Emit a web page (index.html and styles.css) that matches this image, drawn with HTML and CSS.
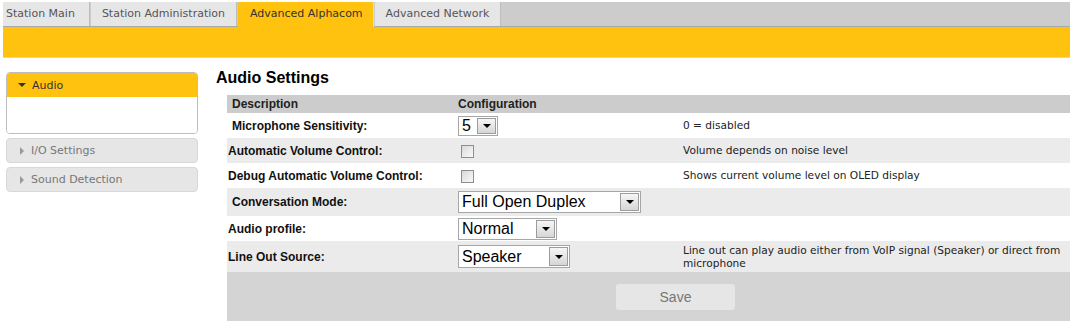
FILE: index.html
```html
<!DOCTYPE html>
<html lang="en">
<head>
  <meta charset="UTF-8">
  <meta name="viewport" content="width=device-width, initial-scale=1.0">
  <title>Advanced Alphacom - Audio</title>
  <link rel="stylesheet" href="styles.css">
</head>
<body>
  <div class="tabs">
    <a class="tab first">Station Main</a>
    <a class="tab">Station Administration</a>
    <a class="tab active">Advanced Alphacom</a>
    <a class="tab">Advanced Network</a>
  </div>
  <div class="subbar"></div>

  <div class="content">
    <div class="sidebar">
      <div class="panel open">
        <div class="panel-head"><span class="arrow down"></span>Audio</div>
        <div class="panel-body"></div>
      </div>
      <div class="panel">
        <div class="panel-head"><span class="arrow right"></span>I/O Settings</div>
      </div>
      <div class="panel">
        <div class="panel-head"><span class="arrow right"></span>Sound Detection</div>
      </div>
    </div>

    <div class="main">
      <h2>Audio Settings</h2>
      <table class="settings">
        <tr class="head">
          <th class="c1 ind">Description</th>
          <th class="c2">Configuration</th>
          <th class="c3"></th>
        </tr>
        <tr class="r1">
          <td class="label ind">Microphone Sensitivity:</td>
          <td><span class="select s-num"><span class="val">5</span><span class="drop"><i></i></span></span></td>
          <td class="desc">0 = disabled</td>
        </tr>
        <tr class="r1 alt">
          <td class="label">Automatic Volume Control:</td>
          <td><span class="check"></span></td>
          <td class="desc">Volume depends on noise level</td>
        </tr>
        <tr class="r1">
          <td class="label">Debug Automatic Volume Control:</td>
          <td><span class="check"></span></td>
          <td class="desc">Shows current volume level on OLED display</td>
        </tr>
        <tr class="r2 alt">
          <td class="label ind">Conversation Mode:</td>
          <td><span class="select s-conv"><span class="val">Full Open Duplex</span><span class="drop"><i></i></span></span></td>
          <td class="desc"></td>
        </tr>
        <tr class="r1">
          <td class="label">Audio profile:</td>
          <td><span class="select s-prof"><span class="val">Normal</span><span class="drop"><i></i></span></span></td>
          <td class="desc"></td>
        </tr>
        <tr class="r3 alt">
          <td class="label">Line Out Source:</td>
          <td><span class="select s-line"><span class="val">Speaker</span><span class="drop"><i></i></span></span></td>
          <td class="desc">Line out can play audio either from VoIP signal (Speaker) or direct from microphone</td>
        </tr>
        <tr class="foot">
          <td colspan="3"><button class="save">Save</button></td>
        </tr>
      </table>
    </div>
  </div>
</body>
</html>
```

FILE: styles.css
```css
body {
  margin: 0;
  padding: 2px 2px 0 3px;
  background: #fff;
  font-family: "Liberation Sans", Arial, sans-serif;
  color: #000;
}

/* top tabs */
.tabs {
  display: flex;
  height: 25px;
  background: linear-gradient(#cccccc 24px, #aaaaaa 24px);
}
.tab {
  height: 24px;
  line-height: 24px;
  padding: 0 11px;
  margin-right: 1px;
  border-right: 1px solid #bdbdbd;
  background: #e6e6e6;
  font-family: "DejaVu Sans", Verdana, sans-serif;
  font-size: 11px;
  color: #555;
  white-space: nowrap;
}
.tab.first {
  padding: 0 14px 0 3px;
}
.tab.active {
  height: 25px;
  padding: 0 10px 0 12px;
  background: #fec20f;
  border-right-color: #e0e0e0;
  border-radius: 2px 2px 0 0;
  color: #333;
}
.subbar {
  height: 30px;
  background: #fec20f;
  border-bottom: 1px solid #ffd66a;
}

/* layout */
.content {
  display: flex;
  align-items: flex-start;
  margin-top: 14px;
}

/* side menu */
.sidebar {
  width: 192px;
  margin-left: 3px;
  display: flex;
  flex-direction: column;
  gap: 4px;
}
.panel {
  border: 1px solid #d8d8d8;
  border-radius: 4px;
  background: #e6e6e6;
  font-family: "DejaVu Sans", Verdana, sans-serif;
  font-size: 11px;
  color: #777;
}
.panel-head {
  height: 23px;
  line-height: 23px;
  padding-left: 11px;
  display: flex;
  align-items: center;
}
.panel.open {
  border-color: #bdbdbd;
  background: #fff;
  overflow: hidden;
}
.panel.open .panel-head {
  height: 24px;
  background: #fec20f;
  color: #333;
}
.panel-body {
  height: 36px;
  background: #fff;
}
.arrow {
  display: inline-block;
  width: 0;
  height: 0;
  margin-right: 6px;
}
.arrow.down {
  border-left: 4px solid transparent;
  border-right: 4px solid transparent;
  border-top: 4px solid #333;
}
.arrow.right {
  border-top: 4px solid transparent;
  border-bottom: 4px solid transparent;
  border-left: 4px solid #999;
  margin-left: 2px;
  margin-right: 7px;
}

/* main area */
.main {
  flex: 1;
  margin-left: 18px;
}
.main h2 {
  font-size: 16px;
  line-height: 16px;
  font-weight: bold;
  margin: -2px 0 9px 0;
}
.settings {
  width: calc(100% - 11px);
  margin-left: 11px;
  border-collapse: collapse;
  table-layout: fixed;
  font-size: 12px;
}
.settings td, .settings th {
  box-sizing: border-box;
  padding: 0;
  vertical-align: middle;
}
.settings .c1 { width: 228px; }
.settings .c2 { width: 225px; }
.settings td:nth-child(2), .settings th:nth-child(2) { padding-left: 3px; }
.head th {
  height: 18px;
  background: #cccccc;
  text-align: left;
  font-weight: bold;
  color: #222;
}
.label {
  font-weight: bold;
  padding-left: 1px !important;
  color: #111;
  white-space: nowrap;
}
.settings .ind { padding-left: 5px !important; }
.r1 td { height: 25px; }
.r2 td { height: 28px; }
.r3 td { height: 31px; }
.alt td { background: #ebebeb; }
.desc {
  padding-left: 3px !important;
  font-family: "DejaVu Sans", Verdana, sans-serif;
  font-size: 10.6px;
  line-height: 13px;
  color: #222;
}

/* dropdowns */
.select {
  display: inline-flex;
  vertical-align: middle;
  height: 21px;
  border: 1px solid #a6a6a6;
  background: #fff;
  font-size: 16px;
  line-height: 21px;
  box-sizing: border-box;
}
.select .val {
  flex: 1;
  padding-left: 3px;
  white-space: nowrap;
  overflow: hidden;
}
.select .drop {
  width: 17px;
  margin: 1px;
  border: 1px solid #9c9c9c;
  background: linear-gradient(#f6f6f6, #d6d6d6);
  display: flex;
  align-items: center;
  justify-content: center;
}
.select .drop i {
  width: 0;
  height: 0;
  border-left: 4px solid transparent;
  border-right: 4px solid transparent;
  border-top: 4px solid #000;
}
.s-num { width: 40px; height: 20px; line-height: 18px; }
.s-conv { width: 183px; height: 22px; line-height: 20px; }
.s-prof { width: 99px; height: 22px; line-height: 20px; }
.s-line { width: 112px; height: 23px; line-height: 21px; }

/* checkboxes */
.check {
  display: inline-block;
  vertical-align: middle;
  width: 11px;
  height: 11px;
  margin-left: 3px;
  border: 1px solid #8e8e8e;
  background: linear-gradient(135deg, #d8d8d8, #fafafa);
}

/* footer */
.foot td {
  height: 49px;
  background: #d4d4d4;
  padding-left: 389px !important;
}
.save {
  width: 119px;
  height: 26px;
  border: none;
  border-radius: 3px;
  background: #e6e6e6;
  font-family: "Liberation Sans", Arial, sans-serif;
  font-size: 14px;
  color: #777;
  cursor: pointer;
}
```
